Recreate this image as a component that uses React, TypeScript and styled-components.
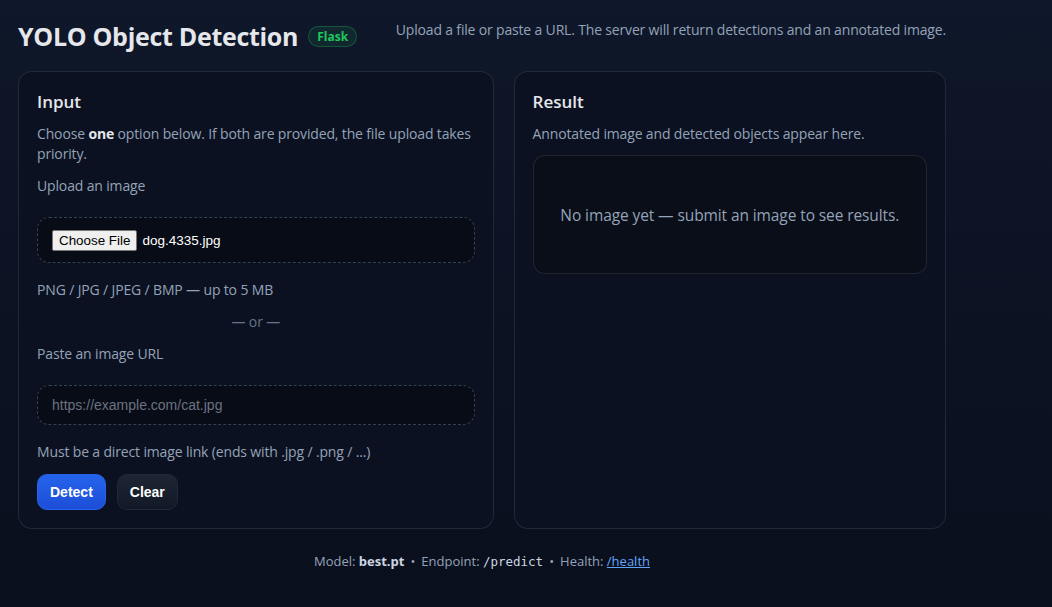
import styled, { createGlobalStyle } from 'styled-components'

const GlobalStyle = createGlobalStyle`
  html, body {
    margin: 0;
    padding: 0;
  }

  body {
    min-height: 100vh;
    background: linear-gradient(180deg, #0f172a 0%, #0b1222 55%, #0a0f1d 100%);
    color: #e5e7eb;
    font-family: 'Open Sans', 'Noto Sans', sans-serif;
  }
`

const Page = styled.div`
  width: 928px;
  padding: 18px 18px 24px;
`

const Header = styled.header`
  display: flex;
  align-items: flex-start;
  justify-content: space-between;
  height: 53px;

  .brand {
    display: flex;
    align-items: center;
    gap: 10px;
    margin-top: 2px;
  }

  h1 {
    margin: 0;
    font-size: 25px;
    font-weight: 700;
    letter-spacing: -0.3px;
    color: #e5e7eb;
    line-height: 32px;
  }

  .subtitle {
    margin: 2px 0 0;
    font-size: 14px;
    letter-spacing: -0.17px;
    color: #94a3b8;
    line-height: 20px;
  }
`

const Badge = styled.span`
  display: inline-flex;
  align-items: center;
  height: 19px;
  padding: 0 8px;
  border-radius: 999px;
  font-size: 12px;
  font-weight: 700;
  color: #22c55e;
  background: rgba(34, 197, 94, 0.1);
  border: 1px solid rgba(34, 197, 94, 0.3);
`

const Grid = styled.main`
  display: grid;
  grid-template-columns: 1.1fr 1fr;
  gap: 20px;
`

const Card = styled.section`
  background: #0b1120;
  border: 1px solid rgba(148, 163, 184, 0.16);
  border-radius: 14px;
  padding: 18px;
  display: flex;
  flex-direction: column;

  h2 {
    margin: 0 0 10px;
    font-size: 17px;
    font-weight: 600;
    line-height: 24px;
    color: #e5e7eb;
  }
`

const Text = styled.p<{ $gap?: number; $dim?: boolean; $center?: boolean }>`
  margin: 0 0 ${(p) => p.$gap ?? 12}px;
  font-size: 14px;
  letter-spacing: -0.15px;
  line-height: 20px;
  color: ${(p) => (p.$dim ? '#64748b' : '#94a3b8')};
  text-align: ${(p) => (p.$center ? 'center' : 'left')};

  b {
    color: #e5e7eb;
  }
`

const DropZone = styled.div`
  display: flex;
  align-items: center;
  height: 44px;
  padding: 0 14px;
  margin-bottom: 17px;
  border: 1px dashed #334155;
  border-radius: 12px;
  background: #080c16;
  font-family: 'Liberation Sans', Arial, sans-serif;

  .pick {
    font-family: inherit;
    font-size: 13.4px;
    color: #000;
    background: #efefef;
    border: 1px solid #767676;
    border-radius: 2px;
    padding: 1px 6px;
    height: 21px;
    margin-right: 5px;
  }

  .name {
    font-size: 13.5px;
    color: #fff;
  }
`

const UrlInput = styled.input`
  box-sizing: border-box;
  width: 100%;
  height: 40px;
  padding: 0 14px;
  margin: 0 0 17px;
  border: 1px dashed #334155;
  border-radius: 12px;
  background: #080c16;
  color: #e5e7eb;
  font-family: 'Liberation Sans', Arial, sans-serif;
  font-size: 14px;
  outline: none;

  &::placeholder {
    color: #6b7280;
  }
`

const Actions = styled.div`
  display: flex;
  gap: 11px;
`

const Button = styled.button<{ $primary?: boolean }>`
  height: 36px;
  padding: 0 12px;
  border-radius: 10px;
  font-family: 'Liberation Sans', Arial, sans-serif;
  font-size: 14px;
  font-weight: 700;
  color: #fff;
  border: 1px solid ${(p) => (p.$primary ? '#2563eb' : '#1f2937')};
  background: ${(p) =>
    p.$primary
      ? 'linear-gradient(180deg, #2563eb, #1d4ed8)'
      : 'linear-gradient(180deg, #1e2533, #111827)'};
`

const Placeholder = styled.div`
  height: 117px;
  display: flex;
  align-items: center;
  justify-content: center;
  border: 1px solid rgba(148, 163, 184, 0.16);
  border-radius: 12px;
  background: #0a0e18;
  font-size: 15.5px;
  letter-spacing: -0.1px;
  color: #94a3b8;
`

const Footer = styled.footer`
  margin-top: 23px;
  text-align: center;
  font-size: 13px;
  color: #94a3b8;

  b {
    color: #cbd5e1;
  }

  code {
    font-family: 'DejaVu Sans Mono', monospace;
    font-size: 12.5px;
    color: #cbd5e1;
  }

  .dot {
    margin: 0 6px;
  }

  a {
    color: #60a5fa;
  }
`

const App = () => {
  return (
    <Page>
      <GlobalStyle />
      <Header>
        <div className="brand">
          <h1>YOLO Object Detection</h1>
          <Badge>Flask</Badge>
        </div>
        <p className="subtitle">
          Upload a file or paste a URL. The server will return detections and an annotated image.
        </p>
      </Header>
      <Grid>
        <Card>
          <h2>Input</h2>
          <Text>
            Choose <b>one</b> option below. If both are provided, the file upload takes priority.
          </Text>
          <Text $gap={21}>Upload an image</Text>
          <DropZone>
            <button className="pick">Choose File</button>
            <span className="name">dog.4335.jpg</span>
          </DropZone>
          <Text>PNG / JPG / JPEG / BMP — up to 5 MB</Text>
          <Text $dim $center>— or —</Text>
          <Text $gap={21}>Paste an image URL</Text>
          <UrlInput placeholder="https://example.com/cat.jpg" />
          <Text>Must be a direct image link (ends with .jpg / .png / ...)</Text>
          <Actions>
            <Button $primary>Detect</Button>
            <Button>Clear</Button>
          </Actions>
        </Card>
        <Card>
          <h2>Result</h2>
          <Text $gap={11}>Annotated image and detected objects appear here.</Text>
          <Placeholder>No image yet — submit an image to see results.</Placeholder>
        </Card>
      </Grid>
      <Footer>
        Model: <b>best.pt</b>
        <span className="dot">•</span>
        Endpoint: <code>/predict</code>
        <span className="dot">•</span>
        Health: <a href="#">/health</a>
      </Footer>
    </Page>
  )
}

export default App
